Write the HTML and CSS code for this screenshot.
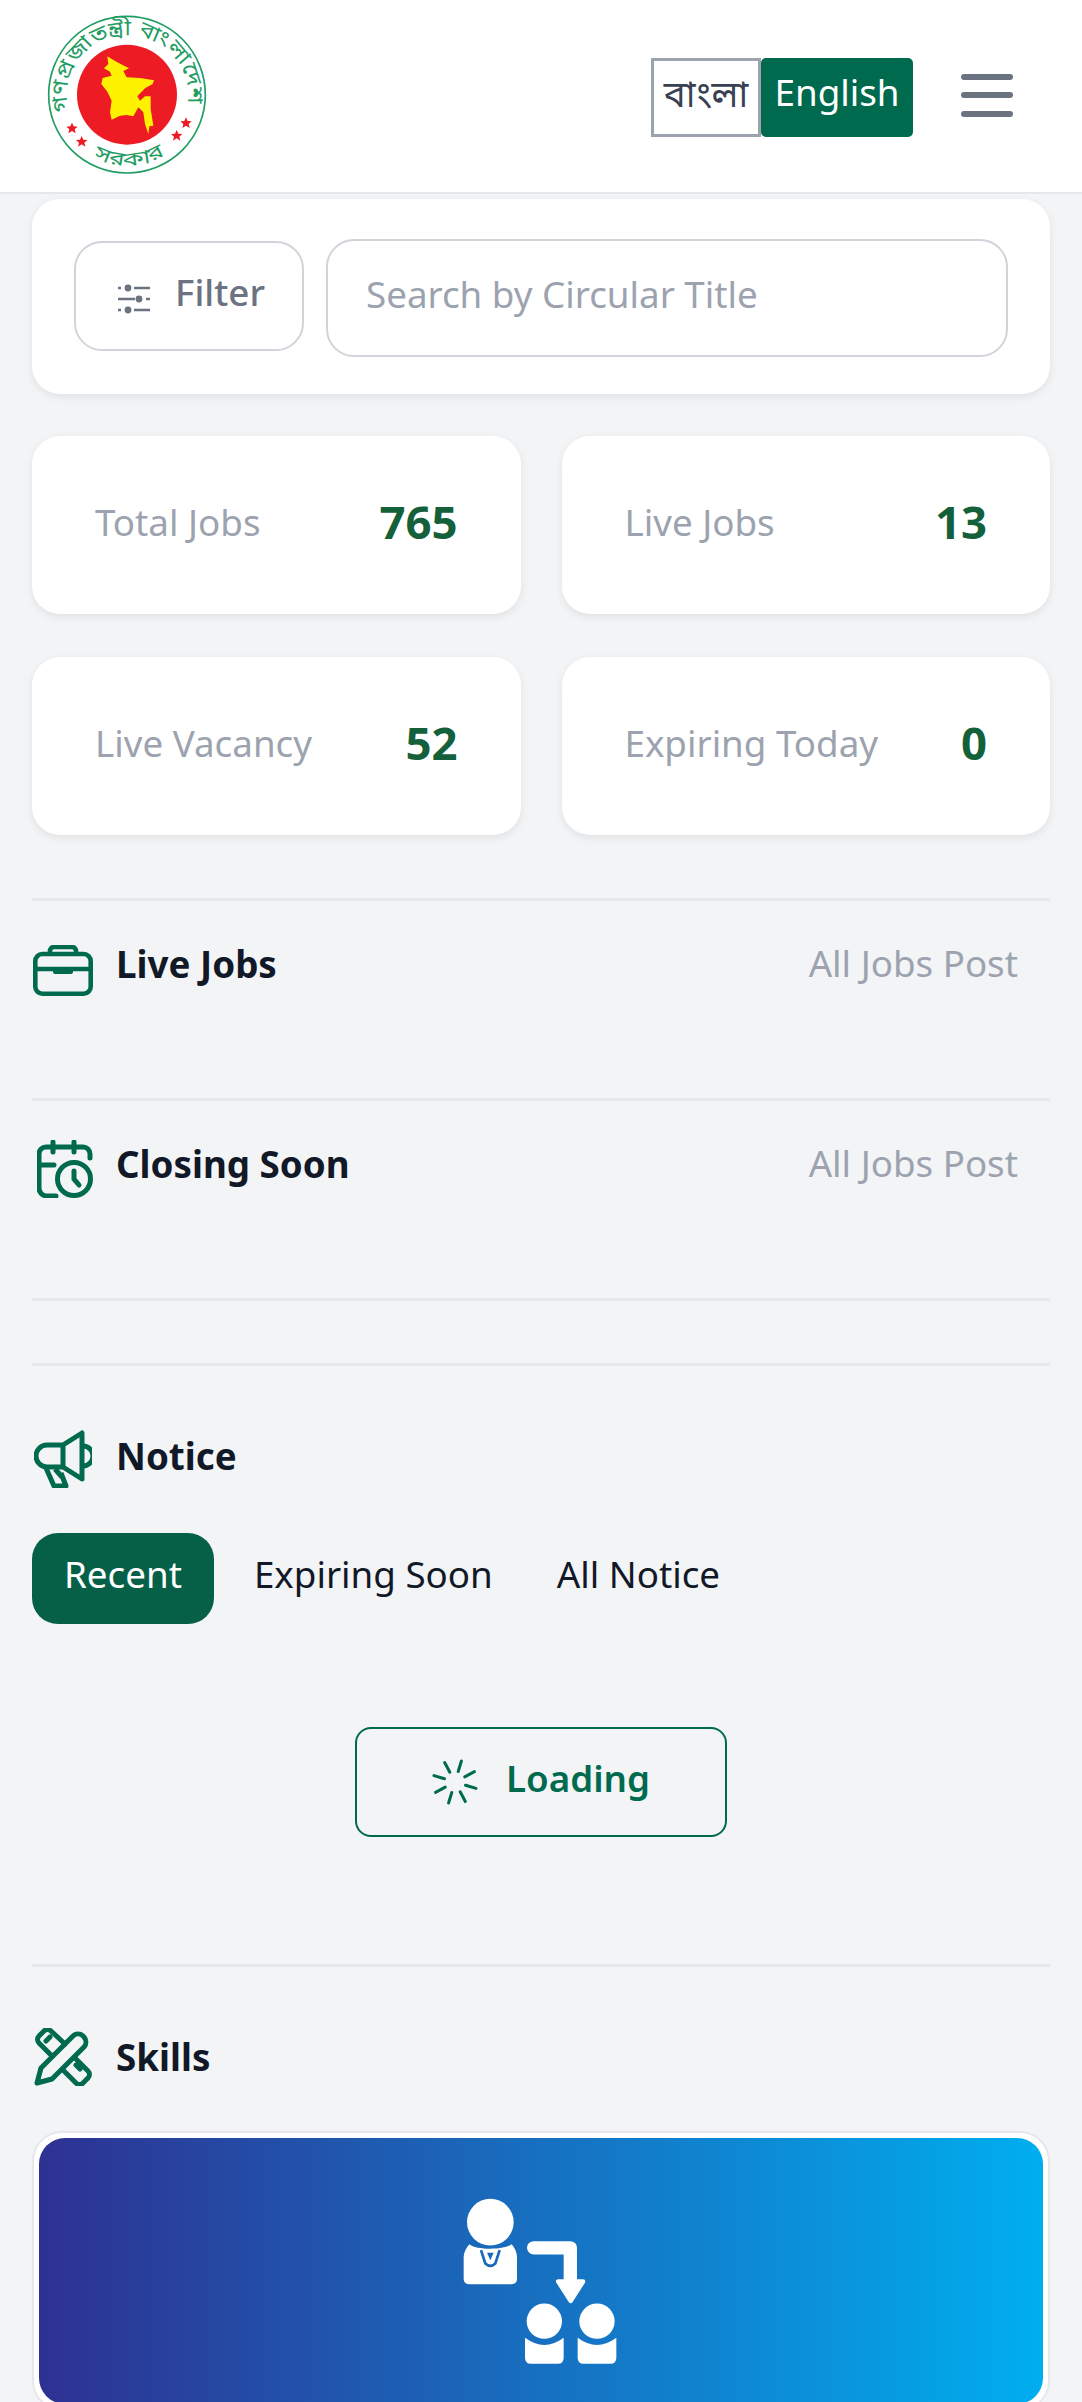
FILE: index.html
```html
<!DOCTYPE html>
<html lang="en">
<head>
    <meta charset="UTF-8">
    <meta name="viewport" content="width=device-width, initial-scale=1.0">
    <title>Jobs Portal</title>
    <link rel="stylesheet" href="styles.css">
</head>
<body>

    <header class="topbar">
        <svg class="logo" viewBox="0 0 570 540">
            <circle cx="291" cy="257" r="235" fill="#fff" stroke="#1f9d63" stroke-width="5"/>
            <circle cx="291" cy="257" r="150" fill="#ed1c24"/>
            <polygon fill="#fff200" points="232,142 245,150 262,160 285,172 297,178 280,186 290,205 330,207 372,214 368,225 345,238 322,262 330,275 345,262 362,262 362,300 370,350 358,352 355,375 345,345 340,310 325,295 310,322 290,318 270,320 245,332 240,310 245,275 232,248 214,225 218,207 245,200 240,188 222,178 235,165"/>
            <g fill="#ed1c24">
                <polygon transform="translate(126 358)" points="0,-17 5,-6 17,-5 8,3 11,15 0,8 -11,15 -8,3 -17,-5 -5,-6"/>
                <polygon transform="translate(155 398)" points="0,-17 5,-6 17,-5 8,3 11,15 0,8 -11,15 -8,3 -17,-5 -5,-6"/>
                <polygon transform="translate(440 380)" points="0,-17 5,-6 17,-5 8,3 11,15 0,8 -11,15 -8,3 -17,-5 -5,-6"/>
                <polygon transform="translate(468 342)" points="0,-17 5,-6 17,-5 8,3 11,15 0,8 -11,15 -8,3 -17,-5 -5,-6"/>
            </g>
            <path id="seal-top" d="M116 306 A182 182 0 1 1 472 290" fill="none"/>
            <path id="seal-bottom" d="M190 444 A210 210 0 0 0 416 429" fill="none"/>
            <text class="seal-text"><textPath href="#seal-top" textLength="640" lengthAdjust="spacingAndGlyphs">গণপ্রজাতন্ত্রী বাংলাদেশ</textPath></text>
            <text class="seal-text seal-bottom"><textPath href="#seal-bottom" textLength="225" lengthAdjust="spacingAndGlyphs">সরকার</textPath></text>
        </svg>
        <div class="lang-switch">
            <button class="lang-btn">বাংলা</button>
            <button class="lang-btn active">English</button>
        </div>
        <div class="hamburger"><span></span><span></span><span></span></div>
    </header>

    <main class="content">
        <div class="search-card">
            <button class="filter-btn">
                <svg class="filter-icon" viewBox="0 0 32 30" fill="#6b7280" stroke="#6b7280" stroke-width="2.4">
                    <path d="M0 4h3M16 4h16M0 15h17M28 15h4M0 26h3M16 26h16"/>
                    <circle cx="10" cy="4" r="3.4" stroke="none"/>
                    <circle cx="21" cy="15" r="3.4" stroke="none"/>
                    <circle cx="10" cy="26" r="3.4" stroke="none"/>
                </svg>
                <span class="filter-text">Filter</span>
            </button>
            <input class="search-input" type="text" placeholder="Search by Circular Title">
        </div>

        <div class="stats">
            <div class="stat-card"><span class="stat-label">Total Jobs</span><span class="stat-value">765</span></div>
            <div class="stat-card"><span class="stat-label">Live Jobs</span><span class="stat-value">13</span></div>
            <div class="stat-card"><span class="stat-label">Live Vacancy</span><span class="stat-value">52</span></div>
            <div class="stat-card"><span class="stat-label">Expiring Today</span><span class="stat-value">0</span></div>
        </div>

        <section class="section jobs-section">
            <div class="section-head">
                <svg class="icon-briefcase" viewBox="0 0 60 51" fill="none" stroke="#006a4e" stroke-width="4.6">
                    <rect x="2.3" y="9" width="55.4" height="39.7" rx="7"/>
                    <path d="M2 24H58M17 9V6a4 4 0 0 1 4-4H39a4 4 0 0 1 4 4V9"/>
                    <path d="M20 24H40V27a2 2 0 0 1-2 2H22a2 2 0 0 1-2-2Z" fill="#006a4e" stroke="none"/>
                </svg>
                <h3>Live Jobs</h3>
                <a class="section-link">All Jobs Post</a>
            </div>
        </section>

        <section class="section jobs-section">
            <div class="section-head">
                <svg class="icon-calendar" viewBox="0 0 56 58" fill="none" stroke="#006a4e" stroke-width="5" stroke-linecap="round">
                    <path d="M19 56H10a8 8 0 0 1-8-8V14a7 7 0 0 1 7-7H46a7 7 0 0 1 7 7v4M2 25H17M16 2V12M37 2V12"/>
                    <circle cx="37" cy="39" r="16.5"/>
                    <path d="M37 31V39L42 45"/>
                </svg>
                <h3>Closing Soon</h3>
                <a class="section-link">All Jobs Post</a>
            </div>
        </section>

        <section class="section spacer-section"></section>

        <section class="section notice-section">
            <div class="section-head">
                <svg class="icon-megaphone" viewBox="0 0 58 59" fill="none" stroke="#006a4e" stroke-width="5" stroke-linejoin="round">
                    <path d="M29 16L48 4V50L29 38ZM29 16H13a11 11 0 0 0 0 22H29"/>
                    <path d="M49 17a10 10 0 0 1 0 20"/>
                    <path d="M12 39L20 57H32L27 44M21 40L28 48"/>
                </svg>
                <h3>Notice</h3>
            </div>
            <div class="tabs">
                <button class="tab active">Recent</button>
                <button class="tab">Expiring Soon</button>
                <button class="tab">All Notice</button>
            </div>
            <div class="loading-wrap">
                <button class="loading-btn">
                    <svg class="spinner" viewBox="-23 -23 46 46" stroke="#006a4e" stroke-width="3" stroke-linecap="round">
                        <line y1="-11" y2="-22" transform="rotate(17)"/>
                        <line y1="-11" y2="-22" transform="rotate(62)"/>
                        <line y1="-11" y2="-22" transform="rotate(107)"/>
                        <line y1="-11" y2="-22" transform="rotate(152)"/>
                        <line y1="-11" y2="-22" transform="rotate(197)"/>
                        <line y1="-11" y2="-22" transform="rotate(242)"/>
                        <line y1="-11" y2="-22" transform="rotate(287)"/>
                        <line y1="-11" y2="-22" transform="rotate(332)"/>
                    </svg>
                    <span class="loading-text">Loading</span>
                </button>
            </div>
        </section>

        <section class="section skills-section">
            <div class="section-head">
                <svg class="icon-skills" viewBox="0 0 58 58" fill="none" stroke="#006a4e" stroke-width="5" stroke-linejoin="round" stroke-linecap="round">
                    <path d="M3 55L7 40L39 8a7.5 7.5 0 0 1 10 0l1 1a7.5 7.5 0 0 1 0 10L18 51Z"/>
                    <path d="M18 28L5 15a5 5 0 0 1 0-7L10 3a5 5 0 0 1 7 0L31 16M16 9L12 13"/>
                    <path d="M41 30L54 43a5 5 0 0 1 0 7L49 55a5 5 0 0 1-7 0L29 42M42 37L46 41"/>
                </svg>
                <h3>Skills</h3>
            </div>
            <div class="skill-card">
                <div class="skill-banner">
                    <svg class="skill-icon" viewBox="0 0 720 693" fill="#fff">
                        <circle cx="208" cy="158" r="70"/>
                        <path d="M145 224C165 242 250 242 272 224C282 236 288 250 288 262V328Q288 344 272 344H144Q128 344 128 328V262C128 250 135 236 145 224Z"/>
                        <path d="M180 242L193 282Q208 296 223 282L236 242" fill="none" stroke="#1769ba" stroke-width="8"/>
                        <path d="M198 250H218L208 272Z" fill="#1769ba"/>
                        <path d="M338 235H448V335" fill="none" stroke="#fff" stroke-width="40" stroke-linecap="round" stroke-linejoin="round"/>
                        <path d="M412 336H486L449 394Z" stroke="#fff" stroke-width="14" stroke-linejoin="round"/>
                        <circle cx="370" cy="455" r="53"/>
                        <circle cx="528" cy="455" r="53"/>
                        <path d="M312 505Q370 548 428 505V565Q428 583 410 583H330Q312 583 312 565Z"/>
                        <path d="M470 505Q528 548 586 505V565Q586 583 568 583H488Q470 583 470 565Z"/>
                    </svg>
                </div>
            </div>
        </section>
    </main>

</body>
</html>
```

FILE: styles.css
```css
* {
    box-sizing: border-box;
}
html, body {
    margin: 0;
    height: 2402px;
    overflow: hidden;
}
body {
    font-family: "Noto Sans", "Noto Sans Bengali", "Open Sans", sans-serif;
    font-size: 36.75px;
    background-color: #f3f4f6;
    color: #111827;
}
button, input {
    font-family: inherit;
    font-size: inherit;
}

/* header */
.topbar {
    display: flex;
    align-items: center;
    height: 194px;
    padding-left: 30px;
    background: #fff;
    border-bottom: 2px solid #e5e7eb;
}
.logo {
    width: 190px;
    height: 180px;
    margin-top: 5px;
}
.seal-text {
    font-size: 64px;
    fill: #1f9d63;
}
.seal-bottom {
    font-size: 58px;
}
.lang-switch {
    display: flex;
    margin-left: auto;
    margin-top: 2px;
}
.lang-btn {
    width: 110px;
    height: 79px;
    padding: 0 0 5px;
    background: #fff;
    color: #374151;
    border: 3px solid #9ca3af;
}
.lang-btn.active {
    width: 152px;
    padding: 0 0 11px;
    background: #006a4e;
    color: #fff;
    border: none;
    border-radius: 5px;
}
.hamburger {
    display: flex;
    flex-direction: column;
    gap: 12.5px;
    width: 52px;
    margin: -2px 69px 0 48px;
}
.hamburger span {
    height: 6px;
    background: #6b7280;
    border-radius: 3px;
}

/* search */
.content {
    padding: 5px 32px 0;
}
.search-card {
    display: flex;
    align-items: center;
    gap: 22px;
    height: 195px;
    padding: 0 42px;
    background: #fff;
    border-radius: 28px;
    box-shadow: 0 3px 8px rgba(0, 0, 0, 0.08);
}
.filter-btn {
    display: flex;
    align-items: center;
    gap: 25px;
    flex: none;
    width: 230px;
    height: 110px;
    padding: 0 0 0 42px;
    margin-top: -1px;
    background: #fff;
    color: #6b7280;
    font-weight: 500;
    border: 2.6px solid #d1d5db;
    border-radius: 28px;
}
.filter-text {
    margin-bottom: 9px;
}
.filter-icon {
    width: 32px;
    height: 30px;
    margin-top: 6px;
}
.search-input {
    flex: 1;
    height: 118px;
    margin-top: 2px;
    padding: 0 38px 8px;
    color: #111827;
    border: 2.6px solid #d1d5db;
    border-radius: 28px;
}
.search-input::placeholder {
    color: #9ca3af;
    opacity: 1;
}

/* stats */
.stats {
    display: grid;
    grid-template-columns: 1fr 1fr;
    gap: 43px 41px;
    margin-top: 42px;
}
.stat-card {
    display: flex;
    align-items: center;
    justify-content: space-between;
    height: 178px;
    padding: 0 63px 6px 63px;
    background: #fff;
    border-radius: 28px;
    box-shadow: 0 3px 8px rgba(0, 0, 0, 0.08);
}
.stat-label {
    color: #9ca3af;
}
.stat-value {
    font-size: 45.5px;
    font-weight: 700;
    color: #14603a;
    margin-bottom: 3px;
}

/* sections */
.section {
    border-top: 3px solid #e5e7eb;
}
.jobs-section {
    height: 200px;
    padding-top: 38px;
}
.jobs-section:first-of-type {
    margin-top: 63px;
}
.spacer-section {
    height: 65px;
}
.section-head {
    display: flex;
    align-items: center;
    height: 60px;
}
.section-head svg {
    flex: none;
}
.section-head h3 {
    margin: 0;
    font-size: 36.75px;
    font-weight: 700;
    color: #111827;
}
.section-link {
    margin: 0 32px 0 auto;
    color: #9ca3af;
}
.jobs-section h3 {
    margin-bottom: 10px;
}
.jobs-section .section-link {
    margin-bottom: 12px;
}
.notice-section .section-head h3 {
    margin-bottom: 4px;
}
.skills-section .section-head h3 {
    margin-bottom: 1px;
}
.icon-briefcase {
    width: 60px;
    height: 51px;
    margin: 2px 23px 0 1px;
}
.icon-calendar {
    width: 56px;
    height: 58px;
    margin: 0 23px 0 5px;
}
.icon-megaphone {
    width: 58px;
    height: 59px;
    margin: 0 24px 0 2px;
}
.icon-skills {
    width: 58px;
    height: 58px;
    margin: 0 24px 0 2px;
}
.notice-section {
    height: 601px;
    padding-top: 62px;
}
.tabs {
    display: flex;
    margin-top: 45px;
}
.tab {
    height: 91px;
    padding: 0 32px 9px;
    background: none;
    color: #111827;
    border: none;
    border-radius: 26px;
}
.tab.active {
    margin-right: 8px;
    background: #066048;
    color: #fff;
}
.loading-wrap {
    display: flex;
    justify-content: center;
    margin-top: 103px;
}
.loading-btn {
    display: flex;
    align-items: center;
    justify-content: center;
    gap: 28px;
    width: 372px;
    height: 110px;
    background: none;
    color: #006a4e;
    font-weight: 600;
    border: 2.6px solid #006a4e;
    border-radius: 16px;
}
.loading-text {
    margin-bottom: 9px;
}
.spinner {
    width: 46px;
    height: 46px;
}
.skills-section {
    padding-top: 60px;
}
.skill-card {
    height: 280px;
    margin-top: 44px;
    padding: 5px;
    background: #fff;
    border: 2px solid #e5e7eb;
    border-radius: 30px;
}
.skill-banner {
    height: 100%;
    padding-top: 31px;
    text-align: center;
    background: linear-gradient(90deg, #2e3192, #00aeef);
    border-radius: 26px;
}
.skill-icon {
    display: block;
    width: 240px;
    height: 232px;
    margin: 0 auto;
}
```
